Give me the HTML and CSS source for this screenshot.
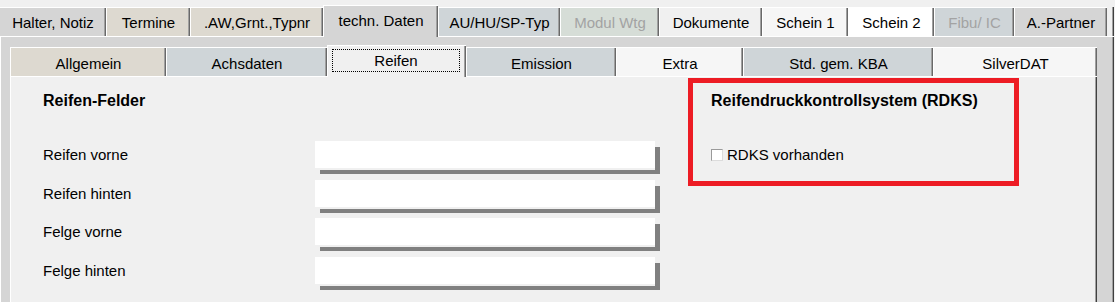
FILE: index.html
```html
<!DOCTYPE html>
<html lang="de">
<head>
    <meta charset="UTF-8">
    <title>Fahrzeug - techn. Daten - Reifen</title>
    <link rel="stylesheet" href="styles.css">
</head>
<body>
    <!-- Haupt-Reiter -->
    <div class="tabs">
        <div class="tab grey halter">Halter, Notiz</div>
        <div class="tab beige termine">Termine</div>
        <div class="tab beige aw">.AW,Grnt.,Typnr</div>
        <div class="tab grey techn active">techn. Daten</div>
        <div class="tab blue au">AU/HU/SP-Typ</div>
        <div class="tab green modul disabled">Modul Wtg</div>
        <div class="tab light doku">Dokumente</div>
        <div class="tab lighter schein1">Schein 1</div>
        <div class="tab white schein2">Schein 2</div>
        <div class="tab blue fibu disabled">Fibu/ IC</div>
        <div class="tab grey partner">A.-Partner</div>
        <div class="tab-rest"></div>
    </div>

    <div class="frame">
        <!-- Unter-Reiter techn. Daten -->
        <div class="subtabs">
            <div class="subtab beige allgemein">Allgemein</div>
            <div class="subtab blue achsdaten">Achsdaten</div>
            <div class="subtab light reifen active"><div class="focus">Reifen</div></div>
            <div class="subtab blue emission">Emission</div>
            <div class="subtab lighter extra">Extra</div>
            <div class="subtab blue kba">Std. gem. KBA</div>
            <div class="subtab lighter silverdat">SilverDAT</div>
        </div>

        <div class="panel">
            <div class="content">
                <div class="group">
                    <h2 class="title">Reifen-Felder</h2>
                    <div class="fields">
                        <label class="label">Reifen vorne</label>
                        <div class="field"></div>
                        <label class="label">Reifen hinten</label>
                        <div class="field"></div>
                        <label class="label">Felge vorne</label>
                        <div class="field"></div>
                        <label class="label">Felge hinten</label>
                        <div class="field"></div>
                    </div>
                </div>

                <div class="group">
                    <h2 class="title">Reifendruckkontrollsystem (RDKS)</h2>
                    <div class="check-row">
                        <span class="checkbox"></span>
                        <span>RDKS vorhanden</span>
                    </div>
                </div>
            </div>

            <!-- Markierung -->
            <div class="marker"></div>
        </div>
    </div>
</body>
</html>
```

FILE: styles.css
```css
body {
    margin: 0;
    height: 302px;
    overflow: hidden;
    background-color: #f0f0f0;
    font-family: "Liberation Sans", Arial, sans-serif;
    font-size: 15px;
    color: #000;
}

/* Haupt-Reiter */
.tabs {
    display: flex;
    align-items: flex-end;
    height: 31px;
    padding-top: 5px;
}

.tab,
.subtab {
    box-sizing: border-box;
    height: 29px;
    line-height: 17px;
    text-align: center;
    white-space: nowrap;
    border-top: 1px solid #fff;
    border-left: 1px solid #fff;
    box-shadow: inset -1px 0 #696969, inset -2px 0 #a0a0a0;
}

.tab {
    padding-top: 6px;
}

.tab.active {
    height: 32px;
    margin-bottom: -1px;
    position: relative;
    z-index: 1;
}

.tab-rest {
    width: 7px;
    height: 29px;
    box-shadow: inset -1px 0 #404040, inset -2px 0 #a0a0a0;
}

.halter { width: 106px; border-left: none; }
.termine { width: 84px; }
.aw { width: 133px; }
.techn { width: 115px; }
.au { width: 122px; }
.modul { width: 99px; }
.doku { width: 103px; }
.schein1 { width: 86px; }
.schein2 { width: 86px; }
.fibu { width: 80px; }
.partner { width: 93px; }

.grey { background-color: #d5d5d5; }
.beige { background-color: #ddd9d0; }
.blue { background-color: #cfd5d8; }
.green { background-color: #d6ddd7; }
.light { background-color: #f0f0f0; }
.lighter { background-color: #f6f6f6; }
.white { background-color: #fff; }

.disabled {
    color: #a3a3a3;
}

/* Rahmen */
.frame {
    box-sizing: border-box;
    width: 1114px;
    height: 266px;
    display: flex;
    flex-direction: column;
    padding: 8px 0 0 9px;
    background-color: #d5d5d5;
    border-top: 1px solid #fff;
    border-left: 1px solid #fff;
    box-shadow: inset -1px 0 #404040, inset -2px 0 #a0a0a0;
}

.subtabs {
    display: flex;
    align-items: flex-end;
    height: 31px;
}

.subtab {
    padding-top: 7px;
}

.subtab.active {
    height: 32px;
    margin-bottom: -1px;
    padding-top: 3px;
    position: relative;
    z-index: 1;
}

.focus {
    box-sizing: border-box;
    width: 128px;
    height: 23px;
    margin-left: 4px;
    padding-top: 2px;
    border: 1px dotted #000;
}

.allgemein { width: 156px; }
.achsdaten { width: 161px; }
.reifen { width: 139px; }
.emission { width: 150px; }
.extra { width: 127px; }
.kba { width: 190px; }
.silverdat { width: 164px; }

/* Inhalt */
.panel {
    position: relative;
    box-sizing: border-box;
    width: 1087px;
    flex: 1;
    background-color: #f0f0f0;
    border-top: 1px solid #fff;
    border-left: 1px solid #fff;
    box-shadow: inset -1px 0 #404040, inset -2px 0 #a0a0a0;
}

.content {
    display: grid;
    grid-template-columns: 668px auto;
    padding: 15px 0 0 32px;
}

.title {
    margin: 0;
    font-size: 16px;
    line-height: 18px;
    font-weight: bold;
}

.fields {
    display: grid;
    grid-template-columns: 272px 340px;
    align-items: center;
    row-gap: 11.67px;
    margin-top: 31px;
}

.label {
    line-height: 17px;
}

.field {
    height: 27px;
    background-color: #fff;
    box-shadow: 0 2px 0 #f0f0f0, 5px 6px 0 #808080;
}

.check-row {
    display: flex;
    align-items: center;
    gap: 4px;
    height: 27px;
    margin-top: 31px;
    line-height: 17px;
}

.checkbox {
    box-sizing: border-box;
    width: 12px;
    height: 12px;
    background-color: #fff;
    border: 1px solid;
    border-color: #9a9a9a #dcdcdc #dcdcdc #9a9a9a;
}

.marker {
    position: absolute;
    left: 677px;
    top: 1px;
    box-sizing: border-box;
    width: 331px;
    height: 108px;
    border: 5px solid #ed1c24;
}
```
